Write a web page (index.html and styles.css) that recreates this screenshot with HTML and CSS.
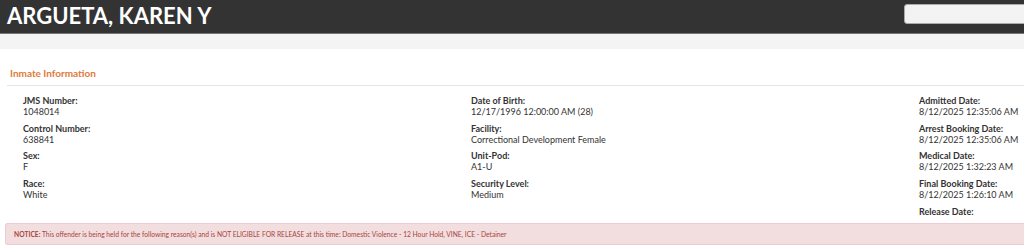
FILE: index.html
```html
<!DOCTYPE html>
<html>

<head>
    <title>ARGUETA, KAREN Y - Inmate Information</title>
    <link rel="stylesheet" href="styles.css">
</head>

<body>
    <div class="topbar">
        <h1>ARGUETA, KAREN Y</h1>
        <input class="search" type="text">
    </div>
    <div class="band"></div>

    <div class="panel">
        <h2 class="panel-title">Inmate Information</h2>
        <div class="fields">
            <div class="col">
                <div class="field"><div class="label">JMS Number:</div><div class="value">1048014</div></div>
                <div class="field"><div class="label">Control Number:</div><div class="value">638841</div></div>
                <div class="field"><div class="label">Sex:</div><div class="value">F</div></div>
                <div class="field"><div class="label">Race:</div><div class="value">White</div></div>
            </div>
            <div class="col">
                <div class="field"><div class="label">Date of Birth:</div><div class="value">12/17/1996 12:00:00 AM (28)</div></div>
                <div class="field"><div class="label">Facility:</div><div class="value">Correctional Development Female</div></div>
                <div class="field"><div class="label">Unit-Pod:</div><div class="value">A1-U</div></div>
                <div class="field"><div class="label">Security Level:</div><div class="value">Medium</div></div>
            </div>
            <div class="col">
                <div class="field"><div class="label">Admitted Date:</div><div class="value">8/12/2025 12:35:06 AM</div></div>
                <div class="field"><div class="label">Arrest Booking Date:</div><div class="value">8/12/2025 12:35:06 AM</div></div>
                <div class="field"><div class="label">Medical Date:</div><div class="value">8/12/2025 1:32:23 AM</div></div>
                <div class="field"><div class="label">Final Booking Date:</div><div class="value">8/12/2025 1:26:10 AM</div></div>
                <div class="field"><div class="label">Release Date:</div><div class="value"></div></div>
            </div>
        </div>
        <div class="notice">
            <b>NOTICE:</b> This offender is being held for the following reason(s) and is NOT ELIGIBLE FOR RELEASE at this time: Domestic Violence - 12 Hour Hold, VINE, ICE - Detainer
        </div>
    </div>
</body>

</html>
```

FILE: styles.css
```css
body {
    margin: 0;
    font-family: Lato, 'Open Sans', sans-serif;
    color: #333;
    background-color: white;
    overflow: hidden;
}

.topbar {
    display: flex;
    justify-content: space-between;
    align-items: flex-start;
    height: 33px;
    background-color: #333;
    border-bottom: 1px solid #777;
}

.topbar h1 {
    margin: 0;
    padding-left: 7px;
    font-size: 22px;
    line-height: 32px;
    font-weight: bold;
    color: white;
    white-space: nowrap;
}

.search {
    flex: none;
    width: 140px;
    height: 20px;
    box-sizing: border-box;
    margin: 4px -20px 0 0;
    border: 1px solid #aaa;
    border-radius: 3px;
    background-color: #f3f3f3;
}

.band {
    height: 15px;
    background-color: #f4f4f4;
}

.panel {
    margin-left: 5px;
}

.panel-title {
    margin: 17px 0 0 2px;
    padding: 0 0 5px 3px;
    font-size: 10px;
    line-height: 14px;
    font-weight: bold;
    color: #dd7a3c;
    border-bottom: 1px solid #e4e4e4;
}

.fields {
    display: grid;
    grid-template-columns: 448px 448px 448px;
    padding-top: 9px;
    margin-left: 2px;
}

.col {
    padding-left: 16px;
}

.field {
    margin-bottom: 5.67px;
    font-size: 9px;
    line-height: 11px;
    white-space: nowrap;
}

.field .label {
    font-weight: bold;
}

.field .value {
    min-height: 11px;
}

.notice {
    margin-top: -10px;
    height: 22px;
    box-sizing: border-box;
    padding-left: 8px;
    font-size: 6.7px;
    line-height: 20px;
    color: #a94442;
    background-color: #f2dede;
    border: 1px solid #ebccd1;
    border-right: none;
    border-radius: 3px 0 0 3px;
    white-space: nowrap;
}
```
